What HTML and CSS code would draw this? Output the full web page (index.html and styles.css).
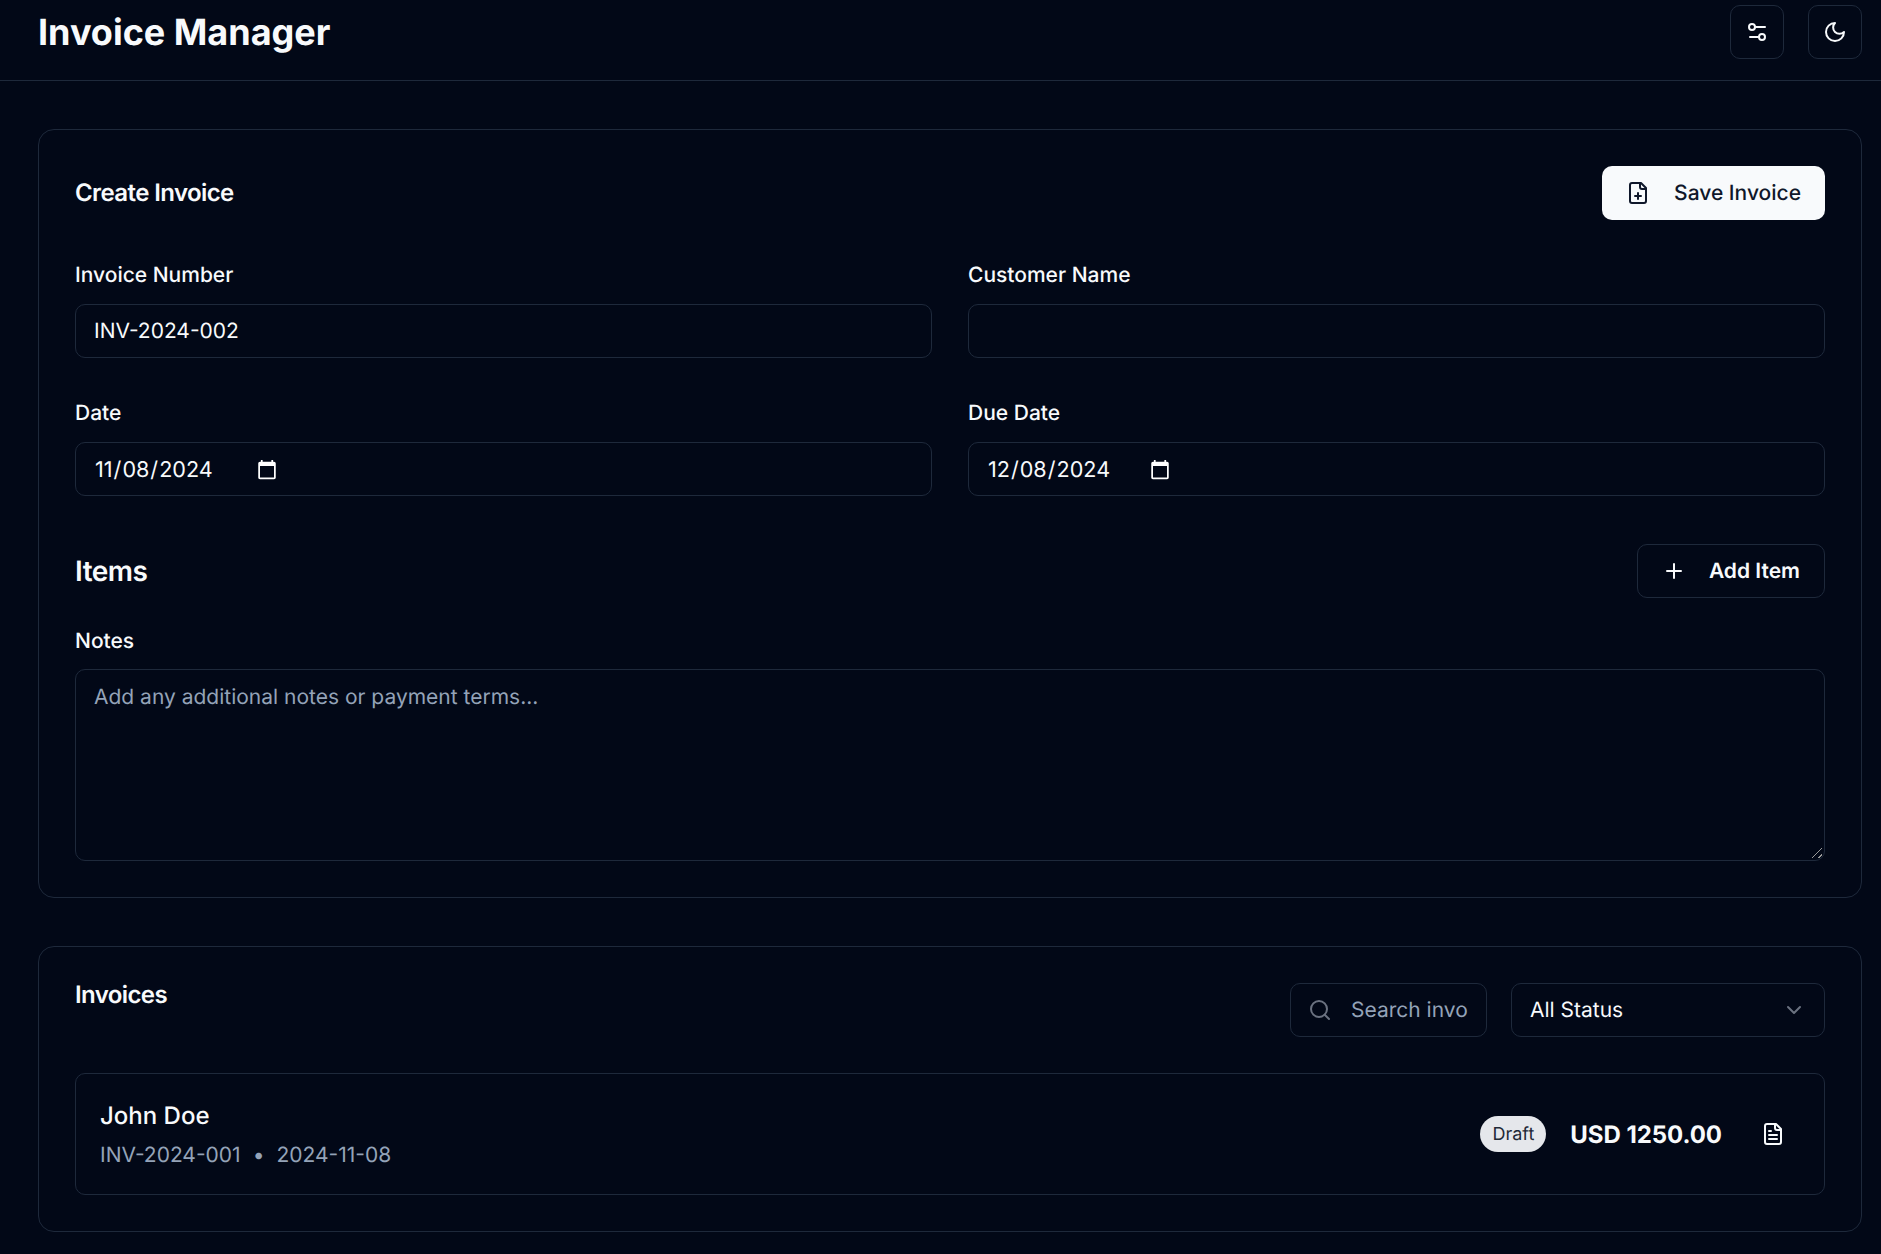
FILE: index.html
```html
<!DOCTYPE html>
<html lang="en">
<head>
<meta charset="utf-8">
<title>Invoice Manager</title>
<link rel="stylesheet" href="styles.css">
</head>
<body>
<header class="topbar">
  <h1 class="brand">Invoice Manager</h1>
  <div class="top-actions">
    <button class="icon-btn" type="button" aria-label="Settings"><svg class="ico" viewBox="0 0 24 24"><path d="M20 7h-9"/><path d="M14 17H5"/><circle cx="17" cy="17" r="3"/><circle cx="7" cy="7" r="3"/></svg></button>
    <button class="icon-btn" type="button" aria-label="Theme"><svg class="ico" viewBox="0 0 24 24"><path d="M12 3a6 6 0 0 0 9 9 9 9 0 1 1-9-9Z"/></svg></button>
  </div>
</header>
<main class="page">
  <section class="card">
    <div class="card-head">
      <h2 class="card-title">Create Invoice</h2>
      <button class="btn btn-primary" type="button"><svg class="ico" viewBox="0 0 24 24"><path d="M15 2H6a2 2 0 0 0-2 2v16a2 2 0 0 0 2 2h12a2 2 0 0 0 2-2V7Z"/><path d="M14 2v4a2 2 0 0 0 2 2h4"/><path d="M9 15h6"/><path d="M12 18v-6"/></svg>Save Invoice</button>
    </div>
    <div class="form-grid">
      <div class="field"><label class="label">Invoice Number</label><input class="input" type="text" value="INV-2024-002"></div>
      <div class="field"><label class="label">Customer Name</label><input class="input" type="text"></div>
      <div class="field"><label class="label">Date</label><input class="input date" type="date" value="2024-11-08"></div>
      <div class="field"><label class="label">Due Date</label><input class="input date" type="date" value="2024-12-08"></div>
    </div>
    <div class="items-head">
      <h3 class="items-title">Items</h3>
      <button class="btn btn-outline" type="button"><svg class="ico" viewBox="0 0 24 24"><path d="M5 12h14"/><path d="M12 5v14"/></svg>Add Item</button>
    </div>
    <div class="field notes-field">
      <label class="label">Notes</label>
      <textarea class="input notes" placeholder="Add any additional notes or payment terms..."></textarea>
    </div>
  </section>
  <section class="card">
    <div class="list-head">
      <h2 class="card-title list-title">Invoices</h2>
      <div class="filters">
        <div class="search">
          <svg class="ico" viewBox="0 0 24 24"><circle cx="11" cy="11" r="8"/><path d="m21 21-4.3-4.3"/></svg>
          <input class="search-input" type="text" placeholder="Search invoices...">
        </div>
        <button class="select" type="button"><span>All Status</span><svg class="ico" viewBox="0 0 24 24"><path d="m6 9 6 6 6-6"/></svg></button>
      </div>
    </div>
    <article class="row">
      <div class="row-main">
        <div class="row-name">John Doe</div>
        <div class="row-meta"><span>INV-2024-001</span><span class="dot">•</span><span>2024-11-08</span></div>
      </div>
      <div class="row-side">
        <span class="badge">Draft</span>
        <span class="amount">USD 1250.00</span>
        <button class="doc-btn" type="button" aria-label="Open"><svg class="ico" viewBox="0 0 24 24"><path d="M15 2H6a2 2 0 0 0-2 2v16a2 2 0 0 0 2 2h12a2 2 0 0 0 2-2V7Z"/><path d="M14 2v4a2 2 0 0 0 2 2h4"/><path d="M10 9H8"/><path d="M16 13H8"/><path d="M16 17H8"/></svg></button>
      </div>
    </article>
  </section>
</main>
</body>
</html>
```
FILE: styles.css
```css
* { box-sizing: border-box; }
html, body { margin: 0; height: 1254px; overflow: hidden; }
body {
  background: #020817;
  color: #f8fafc;
  font-family: Inter, "Liberation Sans", sans-serif;
  font-size: 21px;
  color-scheme: dark;
  text-rendering: geometricPrecision;
}
h1, h2, h3 { margin: 0; }
button { font-family: inherit; cursor: pointer; text-rendering: geometricPrecision; }
.ico {
  width: 24px;
  height: 24px;
  flex: none;
  fill: none;
  stroke: currentColor;
  stroke-width: 2;
  stroke-linecap: round;
  stroke-linejoin: round;
}
.topbar {
  height: 81px;
  padding: 5px 19px 0 38px;
  display: flex;
  justify-content: space-between;
  align-items: flex-start;
  border-bottom: 1px solid #1e293b;
}
.brand { font-size: 36px; font-weight: 700; line-height: 54px; }
.top-actions { display: flex; gap: 24px; }
.icon-btn {
  width: 54px;
  height: 54px;
  border: 1px solid #1e293b;
  border-radius: 10px;
  background: transparent;
  color: #f8fafc;
  display: flex;
  align-items: center;
  justify-content: center;
  padding: 0;
}
.page {
  padding: 48px 19px 0 38px;
  display: flex;
  flex-direction: column;
  gap: 48px;
}
.card {
  border: 1px solid #1e293b;
  border-radius: 16px;
  padding: 36px;
}
.card-head { display: flex; justify-content: space-between; align-items: center; margin-bottom: 40px; }
.card-title { font-size: 24px; font-weight: 600; line-height: 32px; letter-spacing: -0.6px; }
.btn {
  height: 54px;
  border-radius: 10px;
  padding: 0 24px;
  display: flex;
  align-items: center;
  gap: 24px;
  font-size: 21px;
  font-weight: 500;
}
.btn-primary { background: #f8fafc; color: #0f172a; border: 0; }
.btn-outline { background: transparent; color: #f8fafc; border: 1px solid #1e293b; font-weight: 600; gap: 23px; }
.form-grid { display: grid; grid-template-columns: 1fr 1fr; gap: 40px 36px; }
.field { display: flex; flex-direction: column; gap: 13px; }
.notes-field { gap: 12px; }
.label { font-size: 21px; font-weight: 500; line-height: 30px; padding-top: 1px; box-sizing: content-box; }
.input {
  width: 100%;
  height: 54px;
  background: transparent;
  border: 1px solid #1e293b;
  border-radius: 10px;
  padding: 1px 18px 0;
  color: #f8fafc;
  font-family: inherit;
  font-size: 21px;
  outline: none;
  text-rendering: geometricPrecision;
}
.input::placeholder, .search-input::placeholder { color: #94a3b8; opacity: 1; }
.date { display: block; font-size: 21.6px; }
.date::-webkit-datetime-edit { flex: none; }
.date::-webkit-calendar-picker-indicator { margin-left: -4px; }
.items-head { display: flex; justify-content: space-between; align-items: center; margin: 48px 0 28px; }
.items-title { font-size: 28px; font-weight: 600; letter-spacing: -0.5px; }
.notes { height: 192px; padding: 13px 18px; resize: vertical; display: block; line-height: 30px; }
.notes::-webkit-resizer {
  background: linear-gradient(135deg, transparent 51%, #999 51%, #999 59%, transparent 59%, transparent 79%, #999 79%, #999 87%, transparent 87%) no-repeat right 2px bottom 2px / 11px 11px;
}
.list-head { display: flex; justify-content: space-between; align-items: flex-start; margin-bottom: 36px; }
.list-title { line-height: 24px; }
.filters { display: flex; gap: 24px; }
.search {
  width: 197px;
  height: 54px;
  border: 1px solid #1e293b;
  border-radius: 10px;
  padding: 0 18px 0 17px;
  display: flex;
  align-items: center;
  gap: 19px;
  color: #6b7280;
}
.search-input {
  flex: 1;
  min-width: 0;
  border: 0;
  padding: 0;
  background: transparent;
  color: #f8fafc;
  font-family: inherit;
  font-size: 21px;
  outline: none;
  text-rendering: geometricPrecision;
}
.select {
  width: 314px;
  height: 54px;
  border: 1px solid #1e293b;
  border-radius: 10px;
  padding: 0 18px;
  background: transparent;
  color: #f8fafc;
  font-size: 21px;
  display: flex;
  align-items: center;
  justify-content: space-between;
}
.select .ico { color: #6b7280; }
.row {
  height: 122px;
  border: 1px solid #1e293b;
  border-radius: 10px;
  padding: 0 24px;
  display: flex;
  align-items: center;
  justify-content: space-between;
}
.row-main { padding-top: 2px; }
.row-name { font-size: 24px; font-weight: 500; line-height: 32px; }
.row-meta { margin-top: 9px; color: #94a3b8; font-size: 21px; line-height: 30px; display: flex; gap: 12px; }
.row-side { display: flex; align-items: center; gap: 24px; }
.badge {
  background: #e5e7eb;
  color: #1f2937;
  border-radius: 999px;
  padding: 0 12px;
  height: 36px;
  display: flex;
  align-items: center;
  font-size: 18px;
  font-weight: 400;
}
.amount { font-size: 24px; font-weight: 700; letter-spacing: -0.05px; }
.doc-btn {
  width: 54px;
  height: 54px;
  border: 0;
  padding: 0;
  background: transparent;
  color: #f8fafc;
  display: flex;
  align-items: center;
  justify-content: center;
  margin-left: 0;
}
```
